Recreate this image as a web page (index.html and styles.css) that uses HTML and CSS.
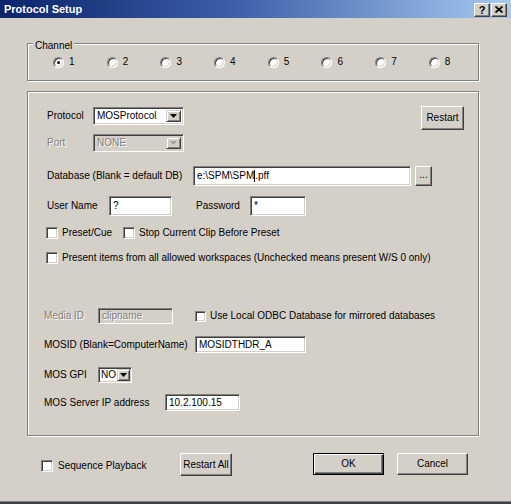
FILE: index.html
```html
<!DOCTYPE html>
<html>
<head>
<meta charset="utf-8">
<title>Protocol Setup</title>
<link rel="stylesheet" href="styles.css">
</head>
<body>
<div class="win">
  <div class="title">
    <span class="title-text">Protocol Setup</span>
    <div class="tbtns">
      <span class="tbtn">?</span>
      <span class="tbtn"><svg width="8" height="7" viewBox="0 0 8 7"><path d="M0.5 0.5 L7.5 6.5 M7.5 0.5 L0.5 6.5" stroke="#000" stroke-width="1.8"/></svg></span>
    </div>
  </div>

  <div class="group channel">
    <span class="legend">Channel</span>
    <div class="radios">
      <div class="radio"><span class="rb on"></span>1</div>
      <div class="radio"><span class="rb"></span>2</div>
      <div class="radio"><span class="rb"></span>3</div>
      <div class="radio"><span class="rb"></span>4</div>
      <div class="radio"><span class="rb"></span>5</div>
      <div class="radio"><span class="rb"></span>6</div>
      <div class="radio"><span class="rb"></span>7</div>
      <div class="radio"><span class="rb"></span>8</div>
    </div>
  </div>

  <div class="group main">
    <div class="row r1">
      <span class="lbl w46">Protocol</span>
      <div class="select sel-proto"><span class="val">MOSProtocol</span><span class="arrow"><svg width="7" height="4" viewBox="0 0 7 4"><polygon points="0,0 7,0 3.5,4" fill="#000"/></svg></span></div>
      <div class="btn restart">Restart</div>
    </div>
    <div class="row r2">
      <span class="lbl w46 dis">Port</span>
      <div class="select sel-proto disabled"><span class="val dis">NONE</span><span class="arrow"><svg width="7" height="4" viewBox="0 0 7 4"><polygon points="0,0 7,0 3.5,4" fill="#a0a0a0"/></svg></span></div>
    </div>
    <div class="row r3">
      <span class="lbl w146">Database (Blank = default DB)</span>
      <div class="field f-db">e:\SPM\SPM<span class="caret"></span>.pff</div>
      <div class="btn dots">...</div>
    </div>
    <div class="row r4">
      <span class="lbl w62">User Name</span>
      <div class="field f-user">?</div>
      <span class="lbl w54 pw">Password</span>
      <div class="field f-pw">*</div>
    </div>
    <div class="row r5">
      <span class="cb first"></span><span class="cblbl">Preset/Cue</span>
      <span class="cb second"></span><span class="cblbl">Stop Current Clip Before Preset</span>
    </div>
    <div class="row r6">
      <span class="cb first"></span><span class="cblbl">Present items from all allowed workspaces (Unchecked means present W/S 0 only)</span>
    </div>
    <div class="row r7 low">
      <span class="lbl w54 dis">Media ID</span>
      <div class="field f-media disabled"><span class="dis">clipname</span></div>
      <span class="cb odbc"></span><span class="cblbl">Use Local ODBC Database for mirrored databases</span>
    </div>
    <div class="row r8 low">
      <span class="lbl w151">MOSID (Blank=ComputerName)</span>
      <div class="field f-mosid">MOSIDTHDR_A</div>
    </div>
    <div class="row r9 low">
      <span class="lbl w54">MOS GPI</span>
      <div class="select sel-gpi"><span class="val">NO</span><span class="arrow"><svg width="7" height="4" viewBox="0 0 7 4"><polygon points="0,0 7,0 3.5,4" fill="#000"/></svg></span></div>
    </div>
    <div class="row r10 low">
      <span class="lbl w121">MOS Server IP address</span>
      <div class="field f-ip">10.2.100.15</div>
    </div>
  </div>

  <div class="bottom">
    <div class="seq"><span class="cb"></span><span class="cblbl">Sequence Playback</span></div>
    <div class="btn b-restartall">Restart All</div>
    <div class="btn default b-ok">OK</div>
    <div class="btn b-cancel">Cancel</div>
  </div>
</div>
</body>
</html>
```

FILE: styles.css
```css
* { box-sizing: border-box; }
html, body { margin: 0; padding: 0; }
body {
  width: 511px;
  height: 504px;
  overflow: hidden;
  background: #d4d0c8;
  font-family: "Liberation Sans", Arial, sans-serif;
  font-size: 10px;
  line-height: 12px;
  color: #000;
}
.win {
  width: 511px;
  height: 504px;
  background: #d4d0c8;
  border-bottom: 2px solid #404040;
  box-shadow: inset 0 -1px 0 #808080;
  display: flex;
  flex-direction: column;
}
.title {
  height: 18px;
  flex: none;
  display: flex;
  align-items: center;
  padding: 0 4px 0 4px;
  background: linear-gradient(to right, #0a246a 0%, #3a5ea8 45%, #a6caf0 100%);
  color: #fff;
  font-weight: bold;
  font-size: 11px;
}
.title-text { flex: 1; }
.tbtns { display: flex; gap: 1px; margin-top: 1px; margin-right: 0; }
.tbtn {
  width: 16px;
  height: 14px;
  background: #d4d0c8;
  border: 1px solid;
  border-color: #fff #404040 #404040 #fff;
  box-shadow: inset -1px -1px 0 #808080;
  color: #000;
  font-size: 11px;
  font-weight: bold;
  line-height: 12px;
  display: flex;
  align-items: center;
  justify-content: center;
}

.group {
  position: relative;
  margin-left: 27px;
  width: 452px;
  border: 1px solid #808080;
  box-shadow: inset 1px 1px 0 #fff, 1px 1px 0 #fff;
}
.legend {
  position: absolute;
  left: 5px;
  top: -4px;
  padding: 0 2px;
  background: #d4d0c8;
  line-height: 12px;
}
.channel { margin-top: 25px; height: 38px; }
.radios { display: flex; padding-left: 25px; margin-top: 12px; }
.radio { width: 53.7px; flex: none; display: flex; align-items: center; gap: 5px; }
.rb {
  width: 11px;
  height: 11px;
  border-radius: 50%;
  background: #fff;
  border: 1px solid;
  border-color: #808080 #fff #fff #808080;
  box-shadow: inset 1px 1px 0 #404040, inset -1px -1px 0 #d4d0c8;
  position: relative;
}
.rb.on::after {
  content: "";
  position: absolute;
  left: 3px;
  top: 3px;
  width: 3px;
  height: 3px;
  border-radius: 50%;
  background: #000;
}

.main { margin-top: 10px; height: 345px; padding: 0 14px 0 19px; }
.row { display: flex; align-items: center; }
.r1 { margin-top: 15px; height: 18px; }
.r2 { margin-top: 9px; height: 18px; }
.r3 { margin-top: 14px; height: 20px; }
.r4 { margin-top: 10px; height: 20px; }
.r5 { margin-top: 11px; height: 12px; }
.r6 { margin-top: 13px; height: 12px; }
.r7 { margin-top: 44px; height: 16px; }
.r8 { margin-top: 12px; height: 17px; }
.r9 { margin-top: 14px; height: 16px; }
.r10 { margin-top: 11px; height: 17px; }
.low { margin-left: -3px; }

.lbl { flex: none; white-space: nowrap; }
.w46 { width: 46px; }
.w54 { width: 54px; }
.w62 { width: 62px; }
.w121 { width: 121px; }
.w146 { width: 146px; }
.w151 { width: 151px; }
.pw { margin-left: 24px; }
.dis { color: #808080; text-shadow: 1px 1px 0 #fff; }

.field {
  flex: none;
  height: 100%;
  background: #fff;
  border: 1px solid;
  border-color: #808080 #fff #fff #808080;
  box-shadow: inset 1px 1px 0 #404040, inset -1px -1px 0 #d4d0c8;
  padding: 0 3px;
  display: flex;
  align-items: center;
  white-space: nowrap;
  overflow: hidden;
}
.field.disabled { background: #d4d0c8; }
.f-db { width: 218px; }
.f-user { width: 63px; }
.f-pw { width: 56px; }
.f-media { width: 75px; }
.f-mosid { width: 111px; }
.f-ip { width: 75px; }
.caret { display: inline-block; width: 1px; height: 12px; background: #000; }

.select {
  flex: none;
  height: 100%;
  display: flex;
  background: #fff;
  border: 1px solid;
  border-color: #808080 #fff #fff #808080;
  box-shadow: inset 1px 1px 0 #404040, inset -1px -1px 0 #d4d0c8;
  padding: 2px;
}
.select.disabled { background: #d4d0c8; }
.select .val { flex: 1; padding-left: 1px; display: flex; align-items: center; overflow: hidden; white-space: nowrap; }
.select .arrow {
  width: 15px;
  flex: none;
  background: #d4d0c8;
  border: 1px solid;
  border-color: #d4d0c8 #404040 #404040 #d4d0c8;
  box-shadow: inset 1px 1px 0 #fff, inset -1px -1px 0 #808080;
  display: flex;
  align-items: center;
  justify-content: center;
}
.sel-proto { width: 91px; }
.sel-gpi { width: 34px; padding: 1px; }
.sel-gpi .val { padding-left: 1px; }
.sel-gpi .arrow { width: 13px; }

.btn {
  flex: none;
  background: #d4d0c8;
  border: 1px solid;
  border-color: #fff #404040 #404040 #fff;
  box-shadow: inset -1px -1px 0 #808080;
  display: flex;
  align-items: center;
  justify-content: center;
  white-space: nowrap;
}
.btn.default {
  border-color: #000;
  box-shadow: inset 1px 1px 0 #fff, inset -1px -1px 0 #404040, inset -2px -2px 0 #808080;
}
.restart { margin-left: auto; width: 43px; height: 24px; align-self: flex-start; margin-top: -1px; }
.dots { width: 17px; height: 20px; margin-left: 4px; padding-bottom: 3px; }

.cb {
  flex: none;
  width: 12px;
  height: 12px;
  background: #fff;
  border: 1px solid;
  border-color: #808080 #fff #fff #808080;
  box-shadow: inset 1px 1px 0 #404040, inset -1px -1px 0 #d4d0c8;
}
.cblbl { margin-left: 4px; white-space: nowrap; }
.cb.first { margin-left: -1px; }
.cb.second { margin-left: 11px; }
.cb.odbc { margin-left: 22px; width: 11px; height: 11px; }

.bottom {
  display: flex;
  align-items: flex-start;
  margin-top: 17px;
  padding-left: 41px;
}
.seq { width: 139px; height: 23px; display: flex; align-items: center; padding-top: 3px; }
.seq .cblbl { margin-left: 5px; }
.b-restartall { width: 52px; height: 23px; }
.b-ok { width: 71px; height: 22px; margin-left: 81px; }
.b-cancel { width: 71px; height: 22px; margin-left: 13px; }
```
